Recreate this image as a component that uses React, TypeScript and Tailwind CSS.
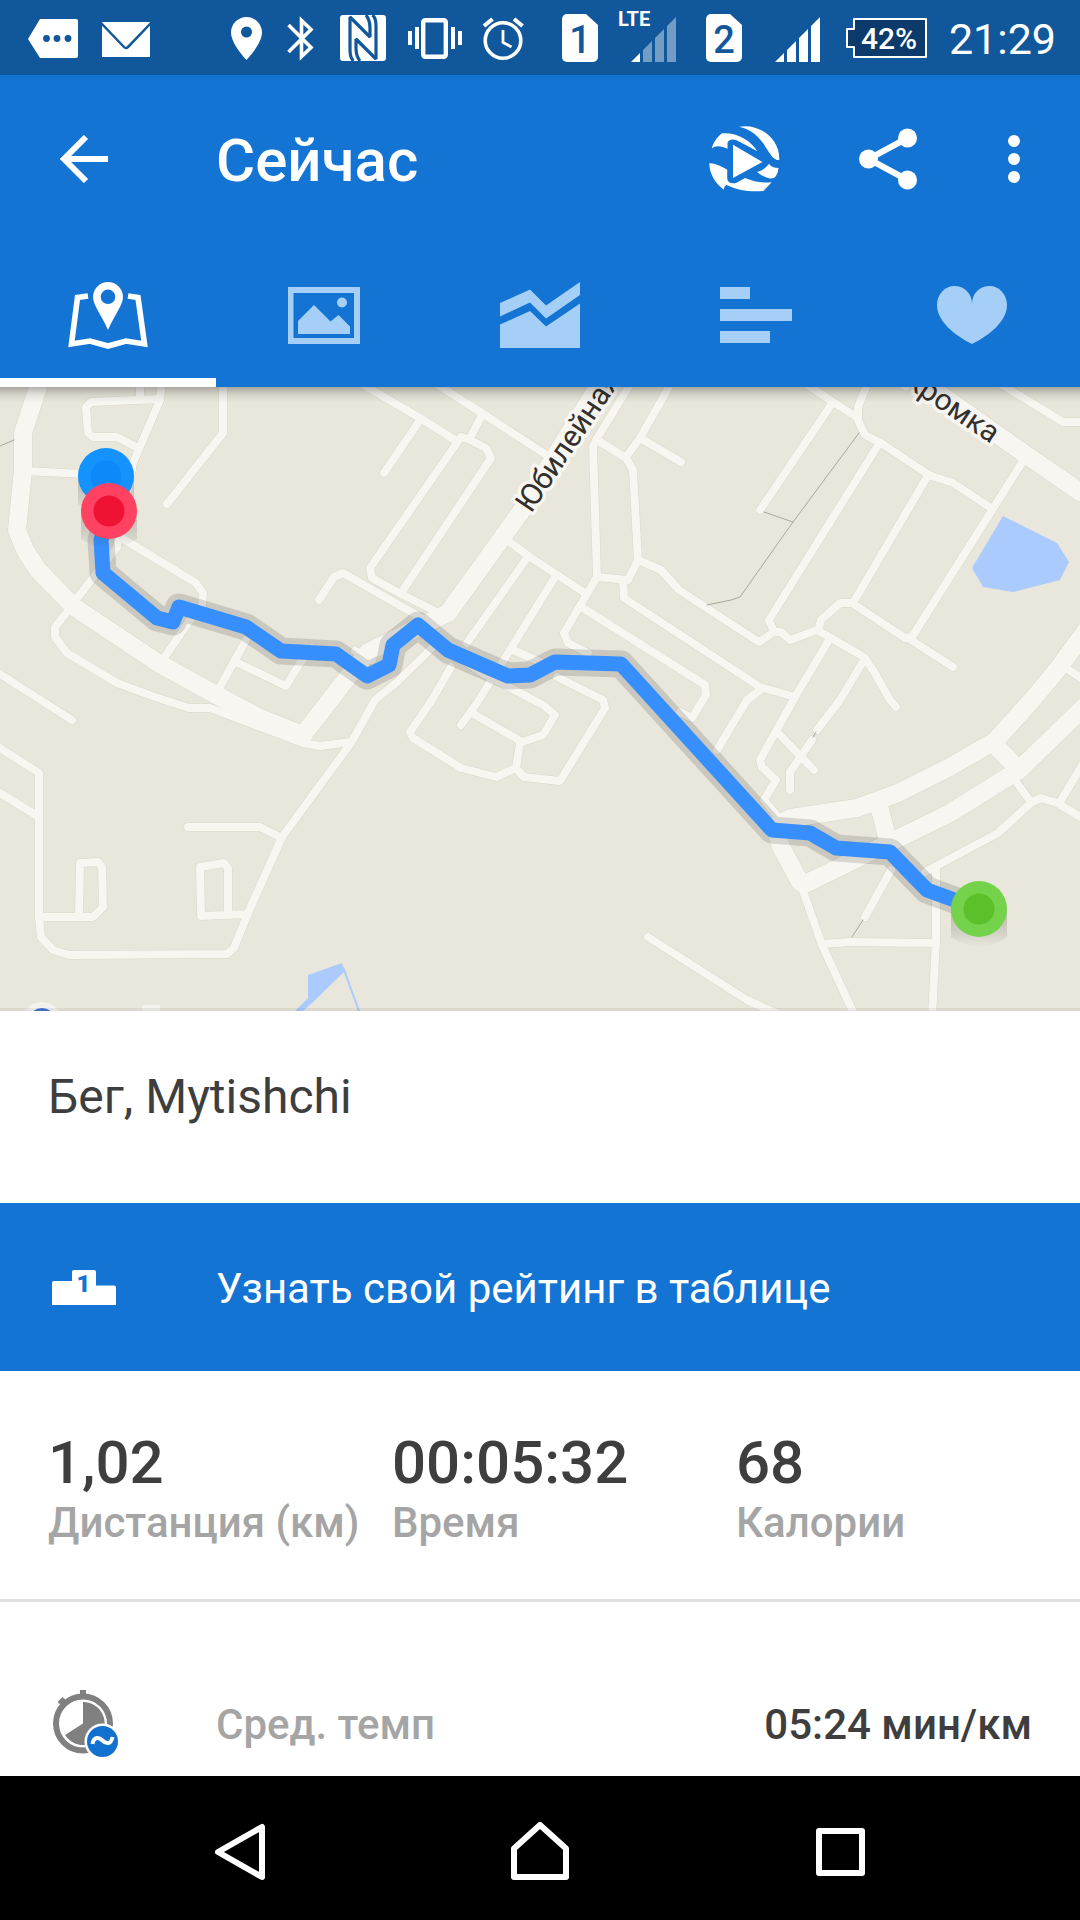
import type { ReactNode } from 'react';

const MAJOR_ROADS = [
    '42,370 38,387 23,433 23,470 17,530 25,550 38,570 74,607 158,663 220,697 258,717 303,735',
    '303,735 344,682 368,652 448,613 520,513 598,387 604,376',
    '920,380 1022,452 1080,492',
    '1090,625 1057,670 1032,700 995,741 948,768 898,793 857,808 791,818 778,824',
    '1085,706 1019,770 950,813 895,840 805,884',
    '776,830 781,847 800,882',
    '995,745 1019,770',
    '879,806 888,840',
];

const MINOR_ROADS = [
    '140,380 140,398',
    '162,380 160,400 133,463 117,547 78,597',
    '160,399 91,402 86,407 88,433 93,437 117,437 136,447',
    '223,380 223,433 167,504',
    '25,471 85,474',
    '120,537 196,583 203,593 202,606',
    '67,612 55,627 55,637 67,653 117,683 155,697 189,708 210,708 303,743 320,746 351,742',
    '0,674 72,720',
    '190,620 162,661',
    '246,640 220,687',
    '238,663 286,686 300,663 312,648',
    '319,600 334,577 343,573 420,617',
    '355,651 372,660',
    '355,380 420,418 455,440',
    '461,437 468,439 486,448 491,458 401,593',
    '461,437 370,568 372,578 399,593 439,613',
    '418,423 384,473',
    '482,415 470,438',
    '430,380 482,413 548,456',
    '511,543 530,557 585,593',
    '527,558 467,643',
    '451,667 432,700 410,732 413,738 461,768 496,777 516,768 520,743',
    '555,577 510,650 477,703 461,725',
    '472,713 522,742 543,735 555,715 543,705 482,673 458,657',
    '513,650 545,664',
    '516,768 524,777 560,781 605,708 603,700 557,677',
    '437,643 396,683 375,700 351,743 282,837 248,913 234,948 227,954 69,955 53,950 41,937 39,917 39,773 0,748',
    '0,793 39,817',
    '188,827 260,827 282,838',
    '79,915 80,863 98,862 102,867 103,907 93,917 39,917',
    '248,914 201,916 200,867 224,863 228,868 228,915',
    '634,378 596,440 593,447 597,577',
    '597,440 626,458 633,470 638,560 628,580 597,577 564,633 568,643 588,653',
    '673,380 640,438 626,457',
    '640,438 681,462',
    '583,608 705,685 706,695 692,718 680,712',
    '623,580 624,598 760,687 795,697 829,640',
    '760,690 747,700 717,750',
    '638,560 661,570 679,590 759,642 774,632 781,632 790,640 817,630 864,657 873,670 890,700 896,707',
    '774,632 769,620 877,447',
    '819,628 821,620 840,603 853,603 927,477',
    '852,603 905,638 912,637 1025,458',
    '908,638 953,667',
    '800,380 833,402 858,418',
    '833,402 760,510',
    '869,380 858,407 858,420 865,435 881,443 929,475 953,483 991,508',
    '864,660 840,700 817,730',
    '812,740 790,772 790,790',
    '778,733 814,770',
    '795,697 760,760 762,767 776,780 764,800 782,822',
    '994,380 1063,422 1084,422',
    '1066,668 1084,680',
    '802,888 822,945 855,1016',
    '822,944 850,942 936,943',
    '936,867 936,940 932,1016',
    '925,872 998,833 1032,802 1041,798 1057,803 1084,819',
    '1017,783 1031,802',
    '1060,802 1084,762',
    '891,870 865,917',
    '648,937 747,1000 778,1014',
];

const FOOTPATHS = [
    '859,433 793,522 740,597 731,600 707,605',
    '764,512 793,522',
    '816,732 813,737',
    '863,920 852,937',
    '0,446 14,440',
];

const ROUTE =
    '109,513 101,540 103,573 157,618 173,622 179,607 246,627 281,651 336,654 367,676 389,665 393,645 418,625 448,650 508,676 530,675 555,662 621,664 772,830 810,833 836,848 890,852 927,890 979,909';

const MARKERS = [
    { name: 'photo', x: 106, y: 476, outer: '#1493ff', inner: '#0d8afa' },
    { name: 'finish', x: 109, y: 511, outer: '#ff4262', inner: '#f01235' },
    { name: 'start', x: 979, y: 909, outer: '#74d34a', inner: '#5bc02a' },
];

function Roads({ lines, width, color }: { lines: string[]; width: number; color: string }) {
    return (
        <g fill="none" stroke={color} strokeWidth={width} strokeLinecap="round" strokeLinejoin="round">
            {lines.map((points) => (
                <polyline key={points} points={points} />
            ))}
        </g>
    );
}

function RouteMap() {
    return (
        <svg className="block h-auto w-full bg-[#e9e6db]" viewBox="0 387 1080 624" role="img" aria-label="Маршрут">
            <defs>
                <linearGradient id="markerShadow" x1="0" y1="0" x2="0" y2="1">
                    <stop offset="0" stopColor="#000" stopOpacity="0.2" />
                    <stop offset="0.6" stopColor="#000" stopOpacity="0.1" />
                    <stop offset="1" stopColor="#000" stopOpacity="0" />
                </linearGradient>
                <linearGradient id="mapTop" x1="0" y1="0" x2="0" y2="1">
                    <stop offset="0" stopColor="#000" stopOpacity="0.28" />
                    <stop offset="0.5" stopColor="#000" stopOpacity="0.08" />
                    <stop offset="1" stopColor="#000" stopOpacity="0" />
                </linearGradient>
            </defs>

            <Roads lines={MINOR_ROADS} width={9} color="#d9d6ca" />
            <Roads lines={MAJOR_ROADS} width={19} color="#d9d6ca" />
            <Roads lines={MINOR_ROADS} width={8} color="#f8f6f1" />
            <Roads lines={MAJOR_ROADS} width={18} color="#f8f6f1" />
            <Roads lines={FOOTPATHS} width={1} color="#aaa79e" />

            {/* Water */}
            <g fill="#abcbff">
                <polygon points="1003,516 1057,543 1069,562 1060,580 1013,592 983,587 972,568" />
                <polygon points="308,975 342,963 344,972 312,1003 303,1011 295,1011 308,998" />
                <polyline points="343,967 359,1011" fill="none" stroke="#abcbff" strokeWidth="2" />
            </g>

            <g
                fill="#332f2c"
                stroke="#f8f6f1"
                strokeWidth="7"
                strokeLinejoin="round"
                paintOrder="stroke"
                fontSize="30"
                className="font-[Roboto,sans-serif]"
            >
                <text transform="translate(531 514) rotate(-56)">Юбилейная</text>
                <text transform="translate(991 444) rotate(34)" textAnchor="end">
                    Кромка
                </text>
            </g>

            <polyline points={ROUTE} fill="none" stroke="#000" strokeOpacity="0.13" strokeWidth="27" strokeLinejoin="round" />
            <polyline points={ROUTE} fill="none" stroke="#368ffc" strokeWidth="15" strokeLinejoin="round" />

            {MARKERS.map((m) => (
                <g key={m.name}>
                    <path d={`M${m.x - 28} ${m.y}h56v28q-28 20-56 0z`} fill="url(#markerShadow)" />
                    <circle cx={m.x} cy={m.y} r="28" fill={m.outer} />
                    <circle cx={m.x} cy={m.y} r="15.5" fill={m.inner} />
                </g>
            ))}

            {/* Provider logo, mostly hidden under the card below */}
            <circle cx="42" cy="1022" r="20" fill="#f3f2ee" />
            <circle cx="42" cy="1022" r="14" fill="#4076cf" />
            <rect x="142" y="1005" width="18" height="6" fill="#f3f2ee" />

            <rect x="0" y="387" width="1080" height="16" fill="url(#mapTop)" />
            <rect x="0" y="1008" width="1080" height="3" fill="#000" fillOpacity="0.06" />
        </svg>
    );
}

function StatusIcon({ width, className, children }: { width: number; className: string; children: ReactNode }) {
    return (
        <svg className={`h-12 shrink-0 overflow-visible ${className}`} viewBox={`0 0 ${width} 48`} fill="#fff" aria-hidden="true">
            {children}
        </svg>
    );
}

function SimCard({ slot, x }: { slot: string; x: number }) {
    return (
        <g transform={`translate(${x} 0)`}>
            <path d="M5 0h19l12 11v32a5 5 0 0 1-5 5H5a5 5 0 0 1-5-5V5a5 5 0 0 1 5-5z" />
            <text x="18" y="39" fill="#11579b" fontSize="38" fontWeight="500" textAnchor="middle">
                {slot}
            </text>
        </g>
    );
}

function SignalBars({ x, weak }: { x: number; weak?: boolean }) {
    return (
        <g transform={`translate(${x} 0)`}>
            <path d="M0 48L9 39V48z" />
            <path d="M12 48V36L21 27V48zM24 48V24L33 15V48zM36 48V12L45 3V48z" opacity={weak ? 0.42 : 1} />
        </g>
    );
}

function StatusBar() {
    return (
        <div className="flex h-[75px] items-center justify-between bg-[#11579b] pr-6 pl-7 text-white">
            <div className="flex items-center gap-6">
                <StatusIcon width={50} className="w-[50px]">
                    <path d="M12 5H48a2 2 0 0 1 2 2V42a2 2 0 0 1-2 2H12L0 25z" />
                    <g fill="#11579b">
                        <circle cx="18.5" cy="24.5" r="3.4" />
                        <circle cx="29" cy="24.5" r="3.4" />
                        <circle cx="40" cy="24.5" r="3.4" />
                    </g>
                </StatusIcon>
                <StatusIcon width={48} className="w-12">
                    <path d="M0 8H48V43H0z" />
                    <path d="M-1 9L22 33Q24 35 26 33L49 9" fill="none" stroke="#11579b" strokeWidth="2.5" />
                </StatusIcon>
            </div>

            <div className="flex items-center gap-5">
                <StatusIcon width={35} className="w-[35px]">
                    <path
                        fillRule="evenodd"
                        d="M17.5 3C9 3 2 10 2 18.5C2 30 17.5 46 17.5 46S33 30 33 18.5C33 10 26 3 17.5 3zM17.5 12.5a5.5 5.5 0 1 1 0 11a5.5 5.5 0 0 1 0-11z"
                    />
                </StatusIcon>
                <StatusIcon width={32} className="w-8">
                    <path d="M4.5 11L27 33.5L17.5 42.5V6.5L27 15.5L4.5 38" fill="none" stroke="#fff" strokeWidth="3.6" />
                </StatusIcon>
                <StatusIcon width={52} className="w-[52px]">
                    <rect x="4" y="1" width="46" height="46" rx="3" />
                    <g fill="none" stroke="#11579b" strokeWidth="3.2" strokeLinejoin="bevel">
                        <path d="M17.5 47Q14 44 14 36V3L34 23V14Q34 6 30 1" />
                        <path d="M36.5 1Q40 4 40 12V45L20 25V34Q20 42 24 47" />
                    </g>
                </StatusIcon>
                <StatusIcon width={55} className="w-[55px]">
                    <rect x="15.2" y="6.2" width="22.6" height="36.6" rx="2" fill="none" stroke="#fff" strokeWidth="4.4" />
                    <path d="M0 17h4v14H0zM7 13h4v22H7zM43 13h4v22h-4zM50 17h4v14h-4z" />
                </StatusIcon>
                <StatusIcon width={43} className="w-[43px]">
                    <g fill="none" stroke="#fff">
                        <circle cx="20" cy="26.5" r="17.8" strokeWidth="3.6" />
                        <path d="M20 16V28.5L28.5 33" strokeWidth="2.8" />
                        <path d="M1 12L9.5 5M31 5L39.5 12" strokeWidth="4.2" />
                    </g>
                </StatusIcon>
                <StatusIcon width={53} className="w-[53px]">
                    <SimCard slot="1" x={16} />
                </StatusIcon>
                <StatusIcon width={58} className="w-[58px]">
                    <text x="-1" y="12" fontSize="20" fontWeight="700">
                        LTE
                    </text>
                    <SignalBars x={12} weak />
                </StatusIcon>
                <StatusIcon width={54} className="w-[54px]">
                    <SimCard slot="2" x={9} />
                </StatusIcon>
                <StatusIcon width={55} className="w-[55px]">
                    <SignalBars x={4} />
                </StatusIcon>
                <StatusIcon width={83} className="w-[83px]">
                    <path d="M8 5H80V43H8V33H1V15H8z" fill="#0b3a6b" stroke="#fff" strokeWidth="2" strokeLinejoin="round" />
                    <text x="43" y="35" fontSize="30" fontWeight="500" textAnchor="middle">
                        42%
                    </text>
                </StatusIcon>
                <span className="pt-1 text-[43px] leading-none">21:29</span>
            </div>
        </div>
    );
}

const tabs = [
    {
        name: 'Карта',
        icon: (
            <>
                <path d="M20 14L9.5 15.5L3.5 62L22 59L40 64L58 59L76.500 62L70 15.5L60 14" fill="none" stroke="currentColor" strokeWidth="5.6" />
                <path
                    fillRule="evenodd"
                    d="M40 0a15 15 0 0 0-15 15c0 8 8 17 15 33c7-16 15-25 15-33a15 15 0 0 0-15-15zM40 7.5a7.3 7.3 0 1 1 0 14.6a7.3 7.3 0 0 1 0-14.6z"
                />
            </>
        ),
    },
    {
        name: 'Фото',
        icon: (
            <>
                <path fillRule="evenodd" d="M4 5H76V62H4zM9.5 11V56H70V11z" />
                <path d="M14 39L30 23L46.5 39.5L54.5 33L66 44.5V52H14z" />
                <circle cx="58" cy="20.5" r="5" />
            </>
        ),
    },
    {
        name: 'Графики',
        icon: (
            <>
                <path d="M0 21L30 7.5L46 23.5L80 0V13L46 36.5L30 20.5L0 34.5z" />
                <path d="M0 42.5L30 29L46 44.5L80 21.5V66H0z" />
            </>
        ),
    },
    { name: 'Круги', icon: <path d="M4 5H34V17H4zM4 27H76V39H4zM4 49H54V61H4z" /> },
    {
        name: 'Пульс',
        icon: <path d="M40 62C22 53 5 39 5 23C5 12 13 4 22.5 4C32 4 40 11 40 22C40 11 48 4 57.5 4C67 4 75 12 75 23C75 39 58 53 40 62z" />,
    },
];

const stats = [
    { label: 'Дистанция (км)', value: '1,02' },
    { label: 'Время', value: '00:05:32' },
    { label: 'Калории', value: '68' },
];

export default function App() {
    return (
        <div className="flex min-h-screen flex-col bg-white font-[Roboto,sans-serif] text-[#3e3e3e]">
            <StatusBar />

            <header className="bg-[#1374d3] text-white">
                <div className="flex h-[168px] items-center pr-3 pl-12">
                    <button type="button" aria-label="Назад" className="mr-24 flex w-18 justify-center">
                        <svg className="size-12" viewBox="0 0 48 48" fill="none" stroke="currentColor" strokeWidth="6">
                            <path d="M48 24H6M26 2L4 24L26 46" />
                        </svg>
                    </button>
                    <h1 className="flex-1 pt-1 text-[60px] leading-none font-medium">Сейчас</h1>
                    <button type="button" aria-label="Воспроизвести" className="flex w-36 justify-center">
                        <svg className="h-[66px] w-[71px]" viewBox="0 0 71 66" fill="currentColor">
                            <path d="M24 18.7L53.4 36L24 52z" />
                            <path d="M30 .7C50-3 71 12 70.3 33.7Q68 34.5 66 33C57 27 54 6 30 .7z" />
                            <path d="M2.8 22.7C4 17 8 11 13 7.3C27 6 42 14 48.2 25.3C41 21 33 17 27 14Q20 12 18.5 17V22.7C13 20 6 19 2.8 22.7z" />
                            <path d="M.3 37.3C6 37 12 40 18.2 43.7V53Q20 59 27.5 56.7L36 52C45 56 54 57 62.7 56.3L54.4 65C42 66 30 65 17.5 59Q15 60 14.8 63.7C6 57 .5 48 .3 37.3z" />
                            <path d="M48 46Q56 44 60 37.7Q63 42 69.5 42Q69.5 46 67 50Q65 53 61 52.5Q54 51 48 46z" />
                        </svg>
                    </button>
                    <button type="button" aria-label="Поделиться" className="flex w-36 justify-center">
                        <svg className="h-[62px] w-[58px]" viewBox="0 0 58 62" fill="currentColor">
                            <path d="M48.5 10L9.5 31L48.5 52" fill="none" stroke="currentColor" strokeWidth="6" />
                            <circle cx="48.5" cy="10" r="9.5" />
                            <circle cx="9.5" cy="31" r="9.5" />
                            <circle cx="48.5" cy="52" r="9.5" />
                        </svg>
                    </button>
                    <button type="button" aria-label="Ещё" className="flex w-27 justify-center">
                        <svg className="h-12 w-3" viewBox="0 0 12 48" fill="currentColor">
                            <circle cx="6" cy="6" r="6" />
                            <circle cx="6" cy="24" r="6" />
                            <circle cx="6" cy="42" r="6" />
                        </svg>
                    </button>
                </div>

                <div role="tablist" className="grid h-36 grid-cols-5">
                    {tabs.map((tab, i) => (
                        <button
                            key={tab.name}
                            type="button"
                            role="tab"
                            aria-label={tab.name}
                            aria-selected={i === 0}
                            className={`flex items-center justify-center border-y-9 border-t-transparent ${
                                i === 0 ? 'border-b-white text-white' : 'border-b-transparent text-[#a5cff6]'
                            }`}
                        >
                            <svg className="h-[66px] w-20" viewBox="0 0 80 66" fill="currentColor" overflow="visible">
                                {tab.icon}
                            </svg>
                        </button>
                    ))}
                </div>
            </header>

            <main className="flex-1">
                <RouteMap />

                <h2 className="flex h-48 items-center px-12 pb-5 text-[48px] leading-none">Бег, Mytishchi</h2>

                <a href="#rating" className="flex h-42 items-center bg-[#1374d3] px-12 text-[42px] leading-none text-white">
                    <span className="mr-24 flex w-18 justify-center">
                        <svg className="h-[35px] w-16" viewBox="0 0 64 35" fill="currentColor" aria-hidden="true">
                            <path d="M2 11H20V2a2 2 0 0 1 2-2H42a2 2 0 0 1 2 2V15.5H62a2 2 0 0 1 2 2V35H0V13a2 2 0 0 1 2-2z" />
                            <text x="31.5" y="22" fill="#1374d3" fontSize="24" fontWeight="900" textAnchor="middle">
                                1
                            </text>
                        </svg>
                    </span>
                    <span className="pt-1">Узнать свой рейтинг в таблице</span>
                </a>

                <dl className="grid h-[231px] grid-cols-3 border-b-3 border-[#e0e0e0] pt-[62px] pl-12 font-medium">
                    {stats.map((stat) => (
                        <div key={stat.label} className="flex flex-col-reverse justify-end">
                            <dt className="text-[42px] leading-[60px] whitespace-nowrap text-[#a5a5a5]">{stat.label}</dt>
                            <dd className="text-[60px] leading-[60px]">{stat.value}</dd>
                        </div>
                    ))}
                </dl>

                <div className="flex items-center px-12 pt-22 text-[42px] leading-none font-medium">
                    <span className="mr-24 flex w-18 justify-center">
                        <svg className="size-[70px]" viewBox="-4 1 70 70" aria-hidden="true">
                            <g fill="#808080">
                                <circle cx="30" cy="34.5" r="27" fill="none" stroke="#808080" strokeWidth="6" />
                                <path d="M27 1H33V8H27zM4.5 13L9.5 8L14 12L9 17z" />
                                <path d="M30 34.5V13A21.5 21.5 0 1 1 12 46z" />
                            </g>
                            <circle cx="49.5" cy="52.5" r="18" fill="#fff" />
                            <circle cx="49.5" cy="52.5" r="15.5" fill="#1270cf" />
                            <path d="M39.5 55C41 47 46 48 49.5 51.5C53 55 58 56 59.5 48" fill="none" stroke="#fff" strokeWidth="4" />
                        </svg>
                    </span>
                    <span className="flex-1 text-[#a5a5a5]">Сред. темп</span>
                    <span>05:24 мин/км</span>
                </div>
            </main>

            <nav className="grid h-36 grid-cols-3 items-center bg-black px-[90px] pt-2 text-white">
                <button type="button" aria-label="Назад" className="flex justify-center">
                    <svg className="size-15" viewBox="0 0 60 60" fill="none" stroke="currentColor" strokeWidth="6" strokeLinejoin="round">
                        <path d="M52 5V55L8 30z" />
                    </svg>
                </button>
                <button type="button" aria-label="Домой" className="flex justify-center">
                    <svg className="size-15" viewBox="0 0 60 60" fill="none" stroke="currentColor" strokeWidth="6" strokeLinejoin="round">
                        <path d="M4 55V26.5L30 3L56 26.5V55z" />
                    </svg>
                </button>
                <button type="button" aria-label="Недавние" className="flex justify-center">
                    <svg className="size-15" viewBox="0 0 60 60" fill="none" stroke="currentColor" strokeWidth="6" strokeLinejoin="round">
                        <rect x="9" y="9" width="43" height="42" />
                    </svg>
                </button>
            </nav>
        </div>
    );
}
